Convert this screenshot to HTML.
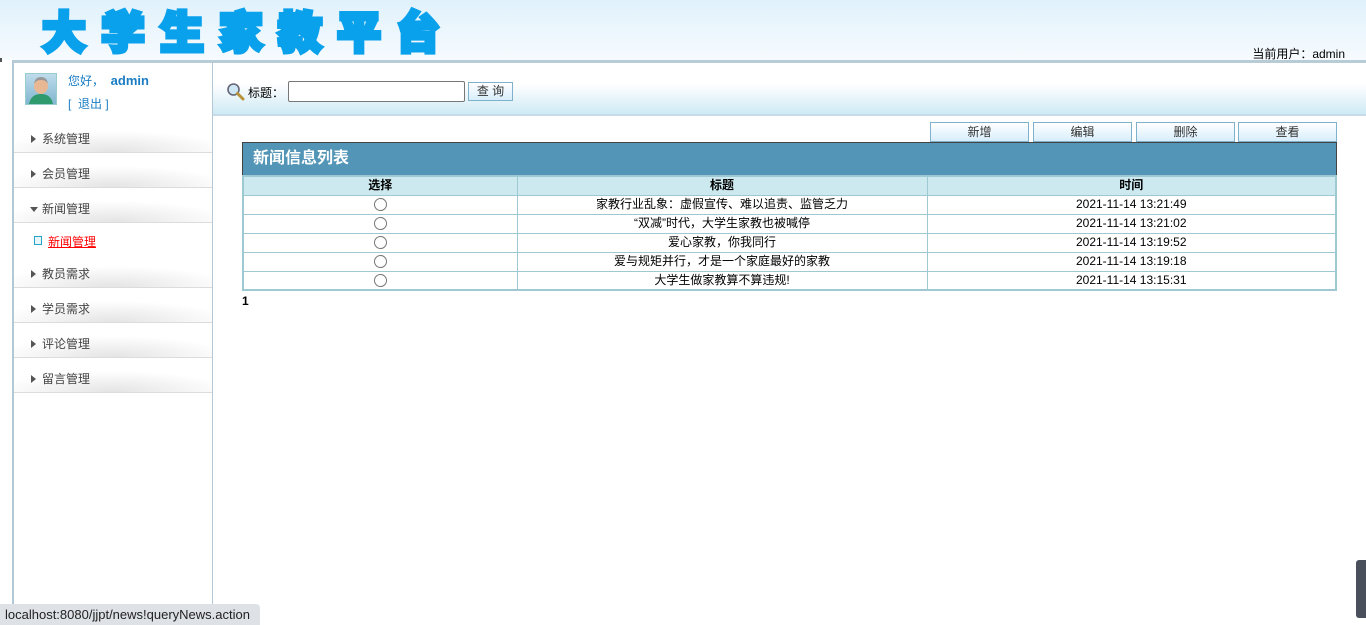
<!DOCTYPE html>
<html><head><meta charset="utf-8">
<style>
*{margin:0;padding:0;box-sizing:border-box}
body{width:1366px;height:625px;overflow:hidden;background:#fff;font-family:"Liberation Sans","Noto Sans CJK SC",sans-serif;font-size:12px;color:#000;position:relative}
.abs{position:absolute}
#hdr{left:0;top:0;width:1366px;height:60px;background:linear-gradient(#e0f1fb,#eef7fd 60%,#f6fbff)}
#logo{left:42px;top:4px;font-family:"WenQuanYi Zen Hei","Noto Sans CJK SC",sans-serif;font-weight:900;font-size:44px;letter-spacing:15px;color:#0aa1ec;line-height:50px;-webkit-text-stroke:4px #0aa1ec;white-space:nowrap}
#user{right:21px;top:45px;font-size:12px}
#topline{left:12px;top:60px;width:1354px;height:3px;background:#b8ccd8}
#side{left:12px;top:60px;width:201px;height:565px;border-left:2px solid #b3c8d6;border-right:1px solid #b3c8d6;border-top:3px solid #b8ccd8}
.item{position:absolute;left:14px;width:198px;height:22px;padding-left:28px;color:#444;font-size:12px;line-height:16px;background:radial-gradient(ellipse 60% 100% at 50% 100%,#e4e4e4,#fff);border-bottom:1px solid #dcdcdc}
.item:before{content:"";position:absolute;left:17px;top:4px;border-left:5px solid #555;border-top:4px solid transparent;border-bottom:4px solid transparent}
.item.open:before{left:16px;top:6px;border-top:5px solid #555;border-left:4px solid transparent;border-right:4px solid transparent;border-bottom:0}
#tool{left:213px;top:63px;width:1153px;height:53px;background:linear-gradient(#fff,#fff 40%,#cfeaf5);border-bottom:2px solid #c6dbe5}
.btn{position:absolute;top:122px;height:20px;border:1px solid #7fb0cc;background:linear-gradient(#fff,#d7eefc);text-align:center;line-height:18px;font-size:12px;color:#333}
table{position:absolute;left:242px;top:175px;width:1095px;border-collapse:collapse;border:2px solid #9ec9d2}
td,th{border:1px solid #9ec9d2;height:19px;text-align:center;font-size:12px;line-height:17px;padding:0}
th{background:#cbe9ef;color:#000;font-weight:bold}
.r{display:inline-block;width:13px;height:13px;border:1px solid #777;border-radius:50%;vertical-align:middle}
</style></head><body>
<div id="hdr" class="abs"></div>
<div id="logo" class="abs">大学生家教平台</div>
<div class="abs" style="left:0;top:58px;width:2px;height:4px;background:#555"></div>
<div id="user" class="abs">当前用户：admin</div>
<div id="topline" class="abs"></div>
<div id="side" class="abs"></div>
<div class="abs" style="left:25px;top:73px;width:32px;height:32px;border:1px solid #9cc;background:linear-gradient(#bfdcec,#7fb6cf)">
<svg width="30" height="30" viewBox="0 0 30 30"><ellipse cx="15" cy="12" rx="7" ry="8" fill="#e8b894"/><path d="M8 10 Q9 3 15 3 Q21 3 22 10 Q20 6 15 6 Q10 6 8 10Z" fill="#999"/><path d="M3 30 Q5 20 15 20 Q25 20 27 30Z" fill="#2e9a6e"/></svg></div>
<div class="abs" style="left:68px;top:72px;color:#1a7dc4;font-size:12px">您好， &nbsp;<b style="font-size:13px">admin</b></div>
<div class="abs" style="left:68px;top:95px;color:#1a7dc4;font-size:12px">[ &nbsp;退出 ]</div>
<div class="item" style="top:131px">系统管理</div>
<div class="item" style="top:166px">会员管理</div>
<div class="item open" style="top:201px">新闻管理</div>
<div class="abs" style="left:34px;top:236px;width:8px;height:9px;border:1px solid #2aa3c9;background:#e6f6fb"></div>
<div class="abs" style="left:48px;top:233px;color:#f00;text-decoration:underline;font-size:12px">新闻管理</div>
<div class="item" style="top:266px">教员需求</div>
<div class="item" style="top:301px">学员需求</div>
<div class="item" style="top:336px">评论管理</div>
<div class="item" style="top:371px">留言管理</div>
<div id="tool" class="abs"></div>
<svg class="abs" style="left:226px;top:82px" width="20" height="20" viewBox="0 0 20 20"><circle cx="7.5" cy="7.5" r="5.5" fill="#cfe6f5" stroke="#667" stroke-width="1.6"/><path d="M11.5 11.5 L17 17" stroke="#b8923a" stroke-width="3" stroke-linecap="round"/></svg>
<div class="abs" style="left:248px;top:84px">标题：</div>
<div class="abs" style="left:288px;top:81px;width:177px;height:21px;border:1px solid #777;border-radius:2px;background:#fff"></div>
<div class="abs" style="left:468px;top:82px;width:45px;height:19px;border:1px solid #7fb0cc;background:linear-gradient(#fff,#d7eefc);text-align:center;line-height:17px;color:#333">查 询</div>
<div class="btn" style="left:930px;width:99px">新增</div>
<div class="btn" style="left:1033px;width:99px">编辑</div>
<div class="btn" style="left:1136px;width:99px">删除</div>
<div class="btn" style="left:1238px;width:99px">查看</div>
<div class="abs" style="left:242px;top:142px;width:1095px;height:34px;background:#5295b6;border:1px solid #444;color:#fff;font-weight:bold;font-size:16px;line-height:32px;padding-left:10px">新闻信息列表</div>
<table>
<tr><th style="width:274px">选择</th><th style="width:410px">标题</th><th>时间</th></tr>
<tr><td><span class="r"></span></td><td>家教行业乱象：虚假宣传、难以追责、监管乏力</td><td>2021-11-14 13:21:49</td></tr>
<tr><td><span class="r"></span></td><td>“双减”时代，大学生家教也被喊停</td><td>2021-11-14 13:21:02</td></tr>
<tr><td><span class="r"></span></td><td>爱心家教，你我同行</td><td>2021-11-14 13:19:52</td></tr>
<tr><td><span class="r"></span></td><td>爱与规矩并行，才是一个家庭最好的家教</td><td>2021-11-14 13:19:18</td></tr>
<tr><td><span class="r"></span></td><td>大学生做家教算不算违规!</td><td>2021-11-14 13:15:31</td></tr>
</table>
<div class="abs" style="left:242px;top:294px;font-weight:bold">1</div>
<div class="abs" style="left:0;top:604px;width:260px;height:21px;background:#dee1e6;border-top-right-radius:4px;color:#222;font-size:13px;line-height:21px;padding-left:5px">localhost:8080/jjpt/news!queryNews.action</div>
<div class="abs" style="left:1356px;top:560px;width:10px;height:58px;background:#4a4f5c;border-radius:3px 0 0 3px"></div>
</body></html>
